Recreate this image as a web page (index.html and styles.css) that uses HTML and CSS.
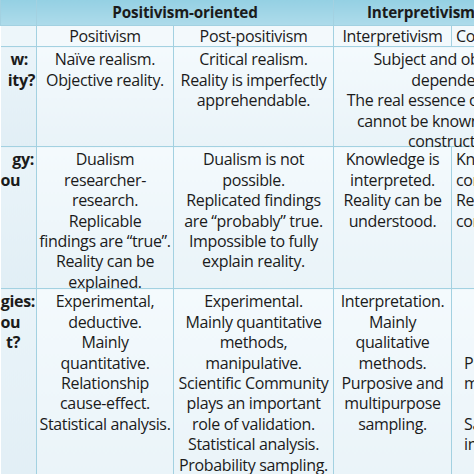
FILE: index.html
```html
<!DOCTYPE html>
<html lang="en">
<head>
<meta charset="utf-8">
<title>Paradigms</title>
<link rel="stylesheet" href="styles.css">
</head>
<body>
<div class="frame">
  <table class="grid">
    <colgroup>
      <col class="c0"><col class="c1"><col class="c2"><col class="c3"><col class="c4">
    </colgroup>
    <thead>
      <tr class="h1">
        <th class="corner"></th>
        <th colspan="2">Positivism-oriented</th>
        <th colspan="2" class="interp">Interpretivism-oriented</th>
      </tr>
      <tr class="h2">
        <th class="side"></th>
        <th>Positivism</th>
        <th>Post-positivism</th>
        <th>Interpretivism</th>
        <th class="lefty">Constructivism</th>
      </tr>
    </thead>
    <tbody>
      <tr>
        <th class="side"><div class="box b1"><span class="f m7">w:</span><span class="f m0">ity?</span></div></th>
        <td><div class="box b1">Naïve realism.<br>Objective reality.</div></td>
        <td><div class="box b1">Critical realism.<br>Reality is imperfectly<br>apprehendable.</div></td>
        <td colspan="2"><div class="box b1">Subject and object are<br>dependent.<br>The real essence of the object<br>cannot be known since it is<br>constructed.</div></td>
      </tr>
      <tr>
        <th class="side"><div class="box b2"><span class="f m1">gy:</span><span class="f m20">ou</span></div></th>
        <td><div class="box b2">Dualism<br>researcher-<br>research.<br>Replicable<br>findings are “true”.<br>Reality can be<br>explained.</div></td>
        <td><div class="box b2">Dualism is not<br>possible.<br>Replicated findings<br>are “probably” true.<br>Impossible to fully<br>explain reality.</div></td>
        <td><div class="box b2">Knowledge is<br>interpreted.<br>Reality can be<br>understood.</div></td>
        <td class="edge"><div class="box b2">Knowledge is<br>constructed.<br>Reality can be<br>constructed.</div></td>
      </tr>
      <tr>
        <th class="side"><div class="box b3"><span class="f m0">gies:</span><span class="f m20">ou</span><span class="f m15">t?</span></div></th>
        <td><div class="box b3">Experimental,<br>deductive.<br>Mainly<br>quantitative.<br>Relationship<br>cause-effect.<br>Statistical analysis.</div></td>
        <td><div class="box b3">Experimental.<br>Mainly quantitative<br>methods,<br>manipulative.<br>Scientific Community<br>plays an important<br>role of validation.<br>Statistical analysis.<br>Probability sampling.</div></td>
        <td><div class="box b3">Interpretation.<br>Mainly<br>qualitative<br>methods.<br>Purposive and<br>multipurpose<br>sampling.</div></td>
        <td class="edge late"><div class="box b3"><br><br><br>Procedures<br>mixed.<br><br>Sampling<br>intentional.</div></td>
      </tr>
    </tbody>
  </table>
</div>
</body>
</html>
```

FILE: styles.css
```css
html, body {
  margin: 0;
  padding: 0;
  background: #ffffff;
}

.frame {
  width: 474px;
  height: 474px;
  overflow: hidden;
}

.grid {
  border-collapse: collapse;
  table-layout: fixed;
  width: 571px;
  font-family: "Open Sans", "Noto Sans", sans-serif;
  font-size: 16px;
  letter-spacing: -0.35px;
  line-height: 20.4px;
  color: #1b1b1b;
}

.c0 { width: 36px; }
.c1 { width: 137px; }
.c2 { width: 160px; }
.c3 { width: 118px; }
.c4 { width: 120px; }

.grid th,
.grid td {
  border: 1px solid #a3d1e1;
  padding: 2px 0 0;
  text-align: center;
  vertical-align: top;
  white-space: nowrap;
}

.grid td {
  background: linear-gradient(#f4fafd, #e9f3f8);
}

.box {
  overflow: visible;
}

.b1 { height: 97px; }
.b2 { height: 139px; }
.b3 { height: 200px; }

.h1 th {
  height: 25px;
  padding: 0;
  vertical-align: middle;
  font-size: 15.3px;
  letter-spacing: -0.2px;
  font-weight: 700;
  background: linear-gradient(#94d0e3, #addbea);
  border-top: 0;
}

.h1 .interp {
  text-align: left;
  padding-left: 33px;
}

.h2 th {
  height: 20px;
  padding: 0;
  vertical-align: middle;
  font-weight: 400;
  background: #f3f9fc;
}

.h2 th.lefty,
.grid td.edge {
  text-align: left;
  padding-left: 4px;
}

.grid td.late {
  padding-left: 12px;
}

.grid th.side {
  border-left: 0;
  background: linear-gradient(#eaf4f9, #e1eef5);
  font-weight: 700;
}

.h2 th.side {
  background: #edf6fa;
}

.f {
  display: block;
  text-align: right;
}

.m0 { margin-right: 1px; }
.m1 { margin-right: 2px; }
.m7 { margin-right: 8px; }
.m15 { margin-right: 16px; }
.m20 { margin-right: 21px; }
```
